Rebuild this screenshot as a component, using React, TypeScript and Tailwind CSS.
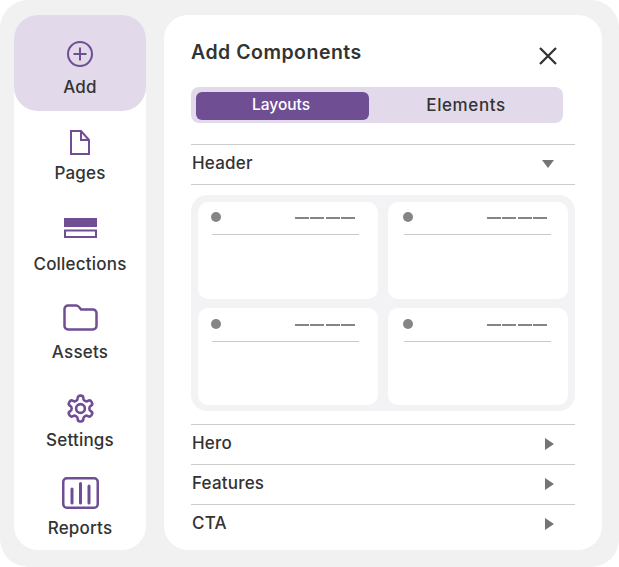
const ink = "#333333";
const purple = "#6f4e94";

function Side({ label, top, gap, children }: { label: string; top: string; gap: string; children: React.ReactNode }) {
  return (
    <div className={`flex flex-col items-center ${top}`}>
      <div className="flex items-center justify-center">{children}</div>
      <div className={`${gap} h-5 text-[17px] leading-5 font-medium tracking-[0.2px] text-[#333333]`}>{label}</div>
    </div>
  );
}

function Card({ side, top }: { side: string; top: string }) {
  return (
    <div className={`h-[97px] rounded-[10px] bg-white ${side} ${top}`}>
      <div className="flex h-[10px] items-center justify-between">
        <div className="h-[10px] w-[10px] rounded-full bg-[#858585]" />
        <div className="mr-[4px] mt-[2px] flex gap-[1.5px]">
          <div className="h-[2.5px] w-[14px] bg-[#858585]" />
          <div className="h-[2.5px] w-[14px] bg-[#858585]" />
          <div className="h-[2.5px] w-[14px] bg-[#858585]" />
          <div className="h-[2.5px] w-[14px] bg-[#858585]" />
        </div>
      </div>
      <div className="ml-[1px] mt-[12px] h-px bg-[#c9c9c9]" />
    </div>
  );
}

function Row({ label }: { label: string }) {
  return (
    <div className="flex h-10 items-center justify-between border-t border-[#cccccc] pb-[2px] pl-[1px] pr-[21px]">
      <span className="text-[17px] font-medium tracking-[0.2px] text-[#333333]">{label}</span>
      <svg width="9" height="12" viewBox="0 0 9 12"><path d="M0 0 L9 6 L0 12 Z" fill="#757575" /></svg>
    </div>
  );
}

export default function App() {
  return (
    <div className="box-border flex h-[567px] w-[619px] gap-[18px] rounded-[28px] bg-[#f1f1f1] pb-[17px] pl-[14px] pr-[17px] pt-[15px] font-['Inter','Liberation_Sans',sans-serif]">
      <aside className="flex w-[132px] flex-col rounded-[24px] bg-white">
        <div className="flex h-[96px] flex-col items-center rounded-[24px] bg-[#e2daea] pt-[26px]">
          <svg width="26" height="26" viewBox="0 0 26 26" fill="none" stroke={purple} strokeWidth="2">
            <circle cx="13" cy="13" r="12" />
            <path d="M13 6.5v13M6.5 13h13" />
          </svg>
          <div className="mt-[10px] h-5 text-[17px] leading-5 font-medium tracking-[0.2px] text-[#333333]">Add</div>
        </div>
        <Side label="Pages" top="mt-[19px]" gap="mt-[8px]">
          <svg width="20" height="25" viewBox="0 0 20 25" fill="none" stroke={purple} strokeWidth="2">
            <path d="M1 1h10l8 9v14H1zM11 1v9h8" />
          </svg>
        </Side>
        <Side label="Collections" top="mt-[35px]" gap="mt-[16px]">
          <svg width="33" height="20" viewBox="0 0 33 20">
            <rect width="33" height="9" fill={purple} />
            <rect x="1" y="12.5" width="31" height="6.5" fill="none" stroke={purple} strokeWidth="2" />
          </svg>
        </Side>
        <Side label="Assets" top="mt-[30px]" gap="mt-[10px]">
          <svg width="35" height="28" viewBox="0 0 35 28" fill="none" stroke={purple} strokeWidth="2.5" strokeLinejoin="round">
            <path d="M1.5 5a3.5 3.5 0 0 1 3.5-3.5h8.5c2 0 3 2 4.5 4h12a3.5 3.5 0 0 1 3.500 3.500v13a3.500 3.500 0 0 1-3.500 3.500H5a3.500 3.500 0 0 1-3.500-3.500z" />
          </svg>
        </Side>
        <Side label="Settings" top="mt-[31px]" gap="mt-[6px]">
          <svg width="31" height="31" viewBox="0 0 24 24" fill="none" stroke={purple} strokeWidth="2" strokeLinecap="round" strokeLinejoin="round">
            <path d="M12.22 2h-.44a2 2 0 0 0-2 2v.18a2 2 0 0 1-1 1.730l-.43.250a2 2 0 0 1-2 0l-.150-.080a2 2 0 0 0-2.730.730l-.220.380a2 2 0 0 0 .730 2.730l.150.100a2 2 0 0 1 1 1.720v.510a2 2 0 0 1-1 1.740l-.150.090a2 2 0 0 0-.730 2.730l.220.380a2 2 0 0 0 2.730.730l.150-.080a2 2 0 0 1 2 0l.430.250a2 2 0 0 1 1 1.730V20a2 2 0 0 0 2 2h.440a2 2 0 0 0 2-2v-.180a2 2 0 0 1 1-1.730l.430-.250a2 2 0 0 1 2 0l.150.080a2 2 0 0 0 2.730-.730l.220-.390a2 2 0 0 0-.730-2.730l-.150-.080a2 2 0 0 1-1-1.740v-.500a2 2 0 0 1 1-1.740l.150-.090a2 2 0 0 0 .730-2.730l-.220-.380a2 2 0 0 0-2.730-.730l-.150.080a2 2 0 0 1-2 0l-.430-.250a2 2 0 0 1-1-1.730V4a2 2 0 0 0-2-2z" />
            <circle cx="12" cy="12" r="3.400" />
          </svg>
        </Side>
        <Side label="Reports" top="mt-[27px]" gap="mt-[9px]">
          <svg width="37" height="32" viewBox="0 0 37 32" fill="none" stroke={purple}>
            <rect x="1.250" y="1.250" width="34.500" height="29.500" rx="3.500" strokeWidth="2.500" />
            <path d="M10 12v14M18.500 6.500v19.500M27 9v17" strokeWidth="3" strokeLinecap="round" />
          </svg>
        </Side>
      </aside>
      <main className="flex min-w-0 flex-1 flex-col rounded-[24px] bg-white px-[27px]">
        <div className="mt-[26px] flex h-6 items-center justify-between pr-[18px]">
          <h1 className="mb-[1px] text-[19.5px] font-semibold tracking-[0.5px] text-[#333333]">Add Components</h1>
          <svg className="mt-[5px]" width="18" height="18" viewBox="0 0 18 18" fill="none" stroke={ink} strokeWidth="2.300">
            <path d="M1 1l16 16M17 1L1 17" />
          </svg>
        </div>
        <div className="mt-[22px] flex h-[36px] w-[372px] rounded-[8px] bg-[#e2daea] p-[5px] pb-[3px]">
          <div className="flex h-[28px] w-[173px] items-center justify-center rounded-[6px] bg-[#6f4e94] pb-[2px] pr-[3px] text-[15.5px] font-medium text-white">Layouts</div>
          <div className="flex h-[28px] flex-1 items-center justify-center pl-[5px] text-[17px] font-medium tracking-[0.6px] text-[#333333]">Elements</div>
        </div>
        <div className="mt-[21px] flex h-[41px] items-center justify-between border-y border-[#cccccc] pb-[2px] pl-[1px] pr-[21px]">
          <span className="text-[17px] font-medium tracking-[0.2px] text-[#333333]">Header</span>
          <svg width="12" height="8" viewBox="0 0 12 8"><path d="M0 0 L12 0 L6 8 Z" fill="#757575" /></svg>
        </div>
        <div className="mt-[10px] grid h-[216px] grid-cols-2 gap-x-[10px] gap-y-[9px] rounded-[16px] bg-[#f3f3f6] p-[7px]">
          <Card side="pl-[13px] pr-[19px]" top="pt-[10px]" />
          <Card side="pl-[15px] pr-[17px]" top="pt-[10px]" />
          <Card side="pl-[13px] pr-[19px]" top="pt-[11px]" />
          <Card side="pl-[15px] pr-[17px]" top="pt-[11px]" />
        </div>
        <div className="mt-[13px]">
          <Row label="Hero" />
          <Row label="Features" />
          <Row label="CTA" />
        </div>
      </main>
    </div>
  );
}
